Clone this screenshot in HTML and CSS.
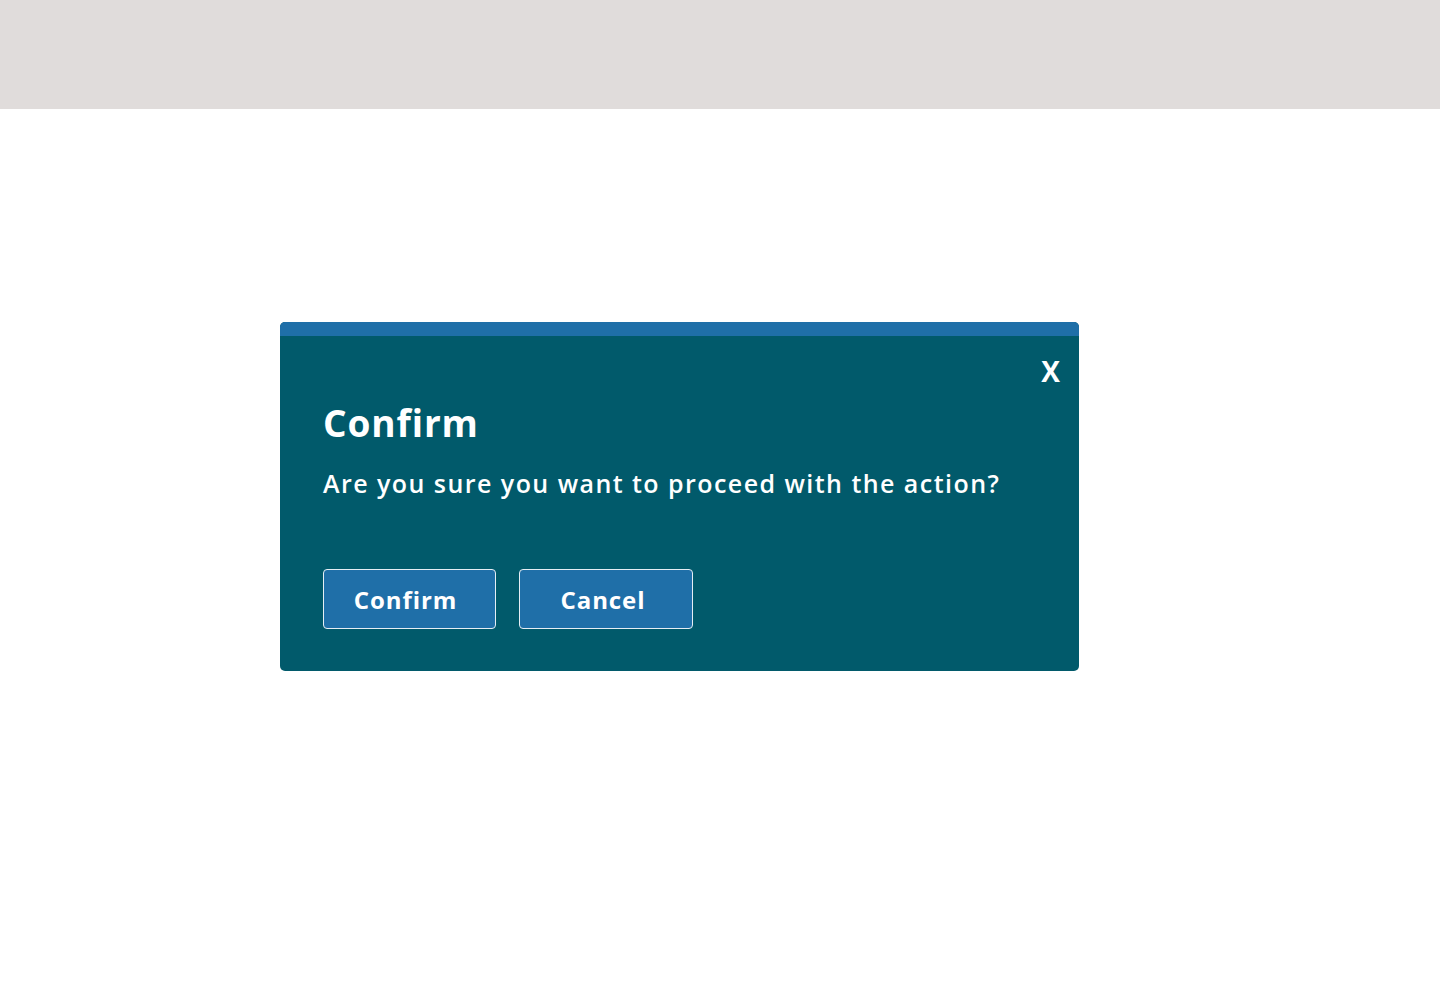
FILE: index.html
```html
<!DOCTYPE html>
<html lang="en">
<head>
<meta charset="utf-8">
<title>Confirm</title>
<link rel="stylesheet" href="styles.css">
</head>
<body>
<header class="topband"></header>
<main class="stage">
  <section class="dialog" role="dialog" aria-labelledby="dlg-title">
    <div class="dialog-bar"></div>
    <div class="dialog-body">
      <div class="dialog-close-row">
        <button class="dialog-close" type="button" aria-label="Close">X</button>
      </div>
      <h2 class="dialog-title" id="dlg-title">Confirm</h2>
      <p class="dialog-text">Are you sure you want to proceed with the action?</p>
      <div class="dialog-actions">
        <button class="btn btn-confirm" type="button">Confirm</button>
        <button class="btn btn-cancel" type="button">Cancel</button>
      </div>
    </div>
  </section>
</main>
</body>
</html>
```

FILE: styles.css
```css
* { box-sizing: border-box; }
html, body { margin: 0; padding: 0; background: #ffffff; }
body { font-family: "Open Sans", "DejaVu Sans", sans-serif; color: #fff; }
.topband { height: 109px; background: #e0dcdb; }
.stage { padding: 213px 0 0 280px; }
.dialog {
  width: 799px;
  border-radius: 5px;
  overflow: hidden;
  background: #015a6b;
}
.dialog-bar { height: 14px; background: #1f6fa8; }
.dialog-body { padding: 20px 19px 42px 43px; }
.dialog-close-row { display: flex; justify-content: flex-end; height: 30px; }
.dialog-close {
  background: none; border: 0; padding: 0; color: #fff;
  font-family: inherit; font-weight: 700; font-size: 28px; line-height: 30px;
  cursor: pointer;
}
.dialog-title {
  margin: 15px 0 0;
  font-size: 37px; font-weight: 700; line-height: 44px;
  letter-spacing: 0.9px;
}
.dialog-text {
  margin: 21px 0 0;
  font-size: 25px; font-weight: 600; line-height: 34px;
  letter-spacing: 1.45px;
}
.dialog-actions { display: flex; gap: 23px; margin-top: 69px; }
.btn {
  height: 60px;
  background: #1f6fa8;
  color: #fff;
  border: 1px solid #e6eef4;
  border-radius: 4px;
  font-family: inherit; font-weight: 700; font-size: 24px;
  letter-spacing: 0.9px;
  cursor: pointer;
}
.btn-confirm { width: 173px; padding: 0 8px 0 0; }
.btn-cancel { width: 174px; padding: 0 6px 0 0; }
```
